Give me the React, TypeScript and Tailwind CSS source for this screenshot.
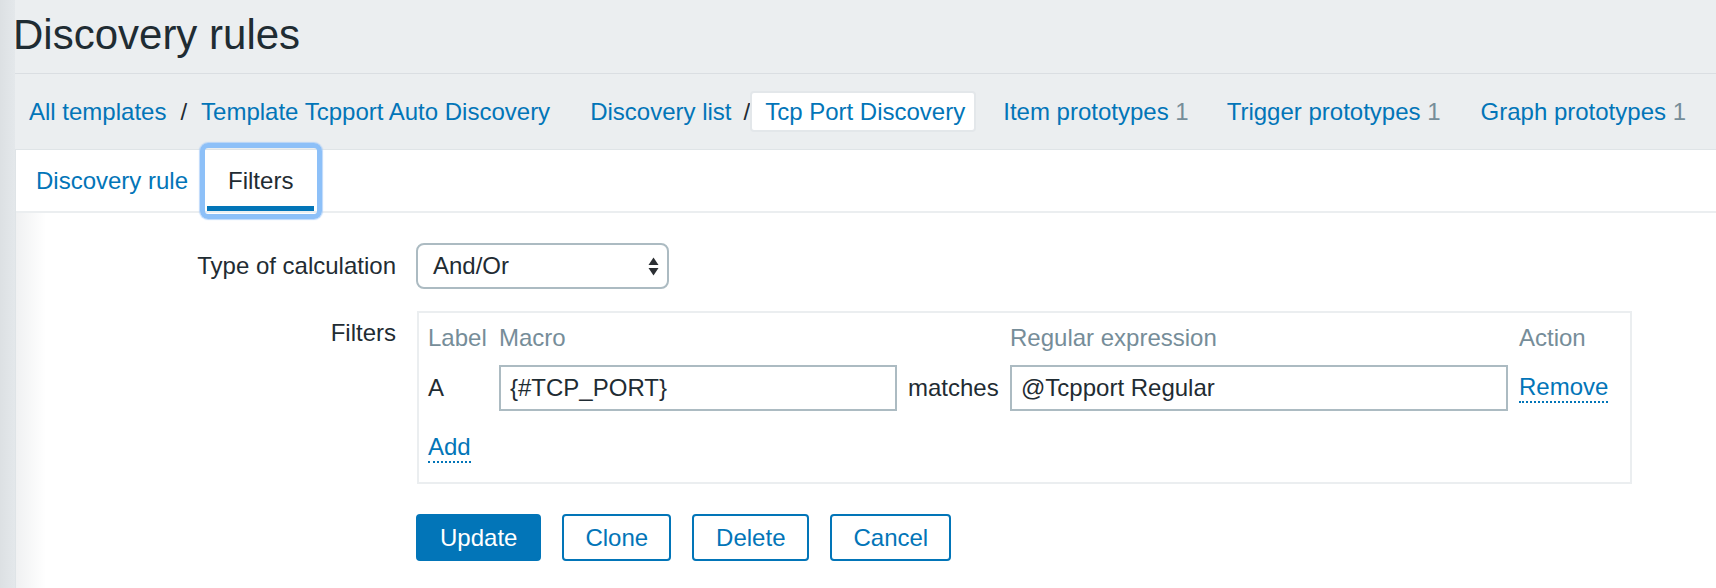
import React from "react";

// --- Fil d'Ariane ---
function Crumbs() {
  return (
    <nav className="flex h-[75px] items-center pl-[14px] text-[#0275b8]">
      <a>All templates</a>
      <span className="mx-[14px] text-[#1f2c33]">/</span>
      <a>Template Tcpport Auto Discovery</a>
      <a className="ml-[40px]">Discovery list</a>
      <span className="ml-[12px] text-[#1f2c33]">/</span>
      <span className="flex h-[41px] items-center rounded-[4px] border-2 border-[#e3e7ea] bg-white pl-[13px] pr-[9px]">
        Tcp Port Discovery
      </span>
      <a className="ml-[27px]">
        Item prototypes <span className="text-[#768d99]">1</span>
      </a>
      <a className="ml-[38px]">
        Trigger prototypes <span className="text-[#768d99]">1</span>
      </a>
      <a className="ml-[40px]">
        Graph prototypes <span className="text-[#768d99]">1</span>
      </a>
    </nav>
  );
}

// --- Onglets ---
function Tabs() {
  return (
    <div className="flex h-[63px] border-b-2 border-[#ebeef0]">
      <div className="flex items-center pl-[20px] pr-[19px] text-[#0275b8]">Discovery rule</div>
      <div className="relative flex items-center px-[21px]">
        Filters
        <span className="absolute bottom-0 left-0 right-0 h-[5px] bg-[#0275b8]" />
        {/* anneau de focus */}
        <span className="pointer-events-none absolute -bottom-[8px] -left-[7px] -right-[8px] -top-[7px] z-10 rounded-[8px] border-[5px] border-[#8dc0f8] shadow-[0_0_1px_1px_rgba(160,200,250,0.7)]" />
      </div>
    </div>
  );
}

function SelectArrows() {
  return (
    <svg width="11" height="19" viewBox="0 0 11 19" className="shrink-0">
      <path d="M0.5 8 L5.5 0.5 L10.5 8 Z" fill="#2b2f33" />
      <path d="M0.5 11 L10.5 11 L5.5 18.5 Z" fill="#2b2f33" />
    </svg>
  );
}

const inputCls =
  "h-[46px] w-full border-2 border-[#acbbc2] bg-white px-[9px] text-[#1f2c33] outline-none";

const linkCls =
  "inline-block border-b-2 border-dotted border-[#0275b8] text-[#0275b8]";

const btnCls = "h-[47px] rounded-[4px] border-2 border-[#0275b8]";

// --- Tableau des filtres ---
function FilterTable() {
  return (
    <div className="w-[1215px] border-2 border-[#ebeef0] pb-[19px] pl-[9px] pt-[11px]">
      <div className="grid h-[28px] grid-cols-[60px_398px_91px_498px_auto] gap-x-[11px] text-[#768d99]">
        <span>Label</span>
        <span>Macro</span>
        <span />
        <span>Regular expression</span>
        <span>Action</span>
      </div>
      <div className="mt-[13px] grid grid-cols-[60px_398px_91px_498px_auto] items-center gap-x-[11px]">
        <span>A</span>
        <input className={inputCls} readOnly defaultValue="{#TCP_PORT}" />
        <span>matches</span>
        <input className={inputCls} readOnly defaultValue="@Tcpport Regular" />
        <span>
          <a className={linkCls}>Remove</a>
        </span>
      </div>
      <div className="mt-[22px]">
        <a className={linkCls}>Add</a>
      </div>
    </div>
  );
}

export default function App() {
  return (
    <div className="flex h-[588px] w-full overflow-hidden bg-[#ebeef0] font-['Liberation_Sans',Arial,sans-serif] text-[24px] leading-[28px] text-[#1f2c33]">
      <div className="w-[15px] shrink-0 bg-linear-to-r from-[#dce0e3] to-[#e4e8eb]" />
      <div className="flex min-w-0 flex-1 flex-col">
        <header className="border-b border-[#dadee2] pb-[14px] pt-[11px]">
          <h1 className="-ml-[2px] text-[42px] font-normal leading-[48px]">Discovery rules</h1>
        </header>

        <Crumbs />

        <main className="flex-1 border-l border-t border-[#dfe4e7] bg-white">
          <Tabs />

          <div className="h-full bg-[linear-gradient(to_right,#f0f1f2,#ffffff_30px)] pt-[30px]">
            {/* Type de calcul */}
            <div className="flex items-center gap-[20px]">
              <label className="w-[380px] text-right">Type of calculation</label>
              <div className="flex h-[46px] w-[253px] items-center justify-between rounded-[8px] border-2 border-[#acbbc2] bg-white pl-[15px] pr-[8px]">
                <span>And/Or</span>
                <SelectArrows />
              </div>
            </div>

            {/* Filtres */}
            <div className="mt-[22px] flex items-start gap-[20px]">
              <label className="w-[380px] pt-[8px] text-right">Filters</label>
              <div className="pl-[1px]">
                <FilterTable />
              </div>
            </div>

            {/* Boutons */}
            <div className="mt-[30px] flex gap-[20px]">
              <div className="w-[380px]" />
              <div className="flex gap-[21px]">
                <button className={`${btnCls} bg-[#0275b8] px-[22px] text-white`}>Update</button>
                <button className={`${btnCls} bg-white px-[21px] text-[#0275b8]`}>Clone</button>
                <button className={`${btnCls} bg-white px-[22px] text-[#0275b8]`}>Delete</button>
                <button className={`${btnCls} bg-white px-[21px] text-[#0275b8]`}>Cancel</button>
              </div>
            </div>
          </div>
        </main>
      </div>
    </div>
  );
}
